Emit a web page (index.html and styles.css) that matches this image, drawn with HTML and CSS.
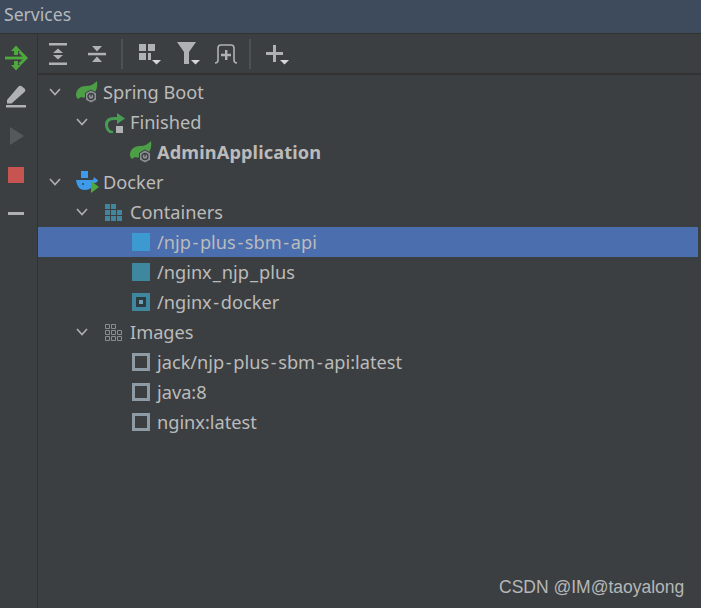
FILE: index.html
```html
<!DOCTYPE html>
<html lang="en">
<head>
<meta charset="utf-8">
<title>Services</title>
<link rel="stylesheet" href="styles.css">
</head>
<body>
<div class="window">
  <header class="title">Services</header>
  <div class="main">
    <aside class="side">
      <div class="side-btn"><svg width="24" height="28" viewBox="0 0 24 28"><path d="M1 14H20" stroke="#4fa83d" stroke-width="2.800"/><path d="M15.500 7.500L22 14l-6.500 6.500" fill="none" stroke="#4fa83d" stroke-width="3"/><path d="M12 1.500l5 5.500h-3v4h-4V7H7z" fill="#4fa83d"/><path d="M10 17h4v4h3L12 26.500 7 21h3z" fill="#4fa83d"/></svg></div>
      <div class="side-btn"><svg width="20" height="23" viewBox="0 0 20 23"><path d="M1 15L12.500 1.500c1-1 2.500-1 3.500 0l2.500 2c1 1 1 2.500 0 3.500L5.500 18.500 1 18.500z" fill="#afb1b3"/><rect x="0" y="20" width="20" height="2.500" fill="#afb1b3"/></svg></div>
      <div class="side-btn"><svg class="play" width="14" height="18" viewBox="0 0 14 18"><path d="M0 0L14 9 0 18z" fill="#56595b"/></svg></div>
      <div class="side-btn"><div class="stop"></div></div>
      <div class="side-btn"><div class="minus"></div></div>
    </aside>
    <div class="content">
      <nav class="toolbar">
        <svg class="tool t-expand" width="18" height="22" viewBox="0 0 18 22"><rect width="18" height="2.500" fill="#afb1b3"/><rect y="19.500" width="18" height="2.500" fill="#afb1b3"/><path d="M9 5.500l5 4.500H4zM9 16.500l5-4.500H4z" fill="#afb1b3"/></svg>
        <svg class="tool t-collapse" width="18" height="18" viewBox="0 0 18 18"><rect y="7.800" width="18" height="2.500" fill="#afb1b3"/><path d="M9 6.500L4 1h10zM9 11.500L14 17H4z" fill="#afb1b3"/></svg>
        <span class="sep s-one"></span>
        <svg class="tool t-group" width="22" height="22" viewBox="0 0 22 22"><path d="M0 1h7v7H0zM9 1h7v7H9zM0 10h7v7H0zM9 10h3v7H9z" fill="#afb1b3"/><path d="M13 17h9l-4.500 4.500z" fill="#d5d7d9"/></svg>
        <svg class="tool t-filter" width="23" height="24" viewBox="0 0 23 24"><path d="M0 0h19L12 10v12H7V10z" fill="#afb1b3"/><path d="M14 18h9l-4.500 4.500z" fill="#d5d7d9"/></svg>
        <svg class="tool t-new" width="24" height="22" viewBox="0 0 24 22"><path d="M1 20c2.500 0 3-1 3-3V5c0-2 1-3 3-3h10c2 0 3 1 3 3v12c0 2 .500 3 3 3" fill="none" stroke="#afb1b3" stroke-width="1.600"/><path d="M11 7h2.400v3.800H17v2.400h-3.600V17H11v-3.800H7v-2.400h4z" fill="#afb1b3"/></svg>
        <span class="sep s-two"></span>
        <svg class="tool t-add" width="23" height="24" viewBox="0 0 23 24"><path d="M7 3h3v7h7v3h-7v7H7v-7H0v-3h7z" fill="#afb1b3"/><path d="M14 18h9l-4.500 4.500z" fill="#d5d7d9"/></svg>
      </nav>
      <ul class="tree">
        <li class="row l1"><svg class="chev" width="16" height="16" viewBox="0 0 16 16"><path d="M3 5l5 5.500L13 5" fill="none" stroke="#afb1b3" stroke-width="1.600"/></svg>
          <svg class="icon" width="22" height="22" viewBox="0 0 22 22"><use href="#spring"/></svg><span>Spring Boot</span></li>
        <li class="row l2"><svg class="chev" width="16" height="16" viewBox="0 0 16 16"><path d="M3 5l5 5.500L13 5" fill="none" stroke="#afb1b3" stroke-width="1.600"/></svg>
          <svg class="icon" width="22" height="22" viewBox="0 0 22 22"><path d="M15 7.500H11C6 7.500 3.500 10 3.500 14c0 4 2.500 7 6.500 7.500" fill="none" stroke="#499c54" stroke-width="3"/><path d="M14 2l8 5.500L14 13z" fill="#499c54"/><rect x="13" y="15" width="7" height="7" fill="#afb1b3"/></svg><span>Finished</span></li>
        <li class="row l3"><span class="chev-space"></span>
          <svg class="icon" width="22" height="22" viewBox="0 0 22 22"><use href="#spring"/></svg><span class="bold">AdminApplication</span></li>
        <li class="row l1 docker"><svg class="chev" width="16" height="16" viewBox="0 0 16 16"><path d="M3 5l5 5.500L13 5" fill="none" stroke="#afb1b3" stroke-width="1.600"/></svg>
          <svg class="icon" width="24" height="22" viewBox="0 0 24 22"><rect x="5" y="0" width="7" height="7" fill="#3d9be9"/><path d="M0 9h17l1-3 2 2 2 1c-1 3-3 3-4 3-1 4-4 7-9 7-5 0-8-3-9-10z" fill="#3d9be9"/><circle cx="7" cy="13" r="1" fill="#27455f"/><path d="M15 10l8 6-8 6z" fill="#4fa83d"/></svg><span>Docker</span></li>
        <li class="row l2"><svg class="chev" width="16" height="16" viewBox="0 0 16 16"><path d="M3 5l5 5.500L13 5" fill="none" stroke="#afb1b3" stroke-width="1.600"/></svg>
          <svg class="icon" width="22" height="22" viewBox="0 0 22 22"><path d="M2 3h5v5H2zM8 3h5v5H8zM2 9h5v5H2zM8 9h5v5H8zM14 9h5v5h-5zM2 15h5v5H2zM8 15h5v5H8zM14 15h5v5h-5z" fill="#40869f"/></svg><span>Containers</span></li>
        <li class="row l3 selected"><span class="chev-space"></span>
          <svg class="icon" width="22" height="22" viewBox="0 0 22 22"><rect x="2" y="2" width="18" height="18" fill="#3d9ad1"/></svg><span>/njp<span class="hy">-</span>plus<span class="hy">-</span>sbm<span class="hy">-</span>api</span></li>
        <li class="row l3"><span class="chev-space"></span>
          <svg class="icon" width="22" height="22" viewBox="0 0 22 22"><rect x="2" y="2" width="18" height="18" fill="#3f869f"/></svg><span>/nginx<span class="us">_</span>njp<span class="us">_</span>plus</span></li>
        <li class="row l3"><span class="chev-space"></span>
          <svg class="icon" width="22" height="22" viewBox="0 0 22 22"><rect x="2" y="2" width="18" height="18" fill="#3f869f"/><rect x="6" y="6" width="10" height="10" fill="#2e3a42"/><rect x="9" y="9" width="4" height="4" fill="#6fa0b5"/></svg><span>/nginx<span class="hy">-</span>docker</span></li>
        <li class="row l2"><svg class="chev" width="16" height="16" viewBox="0 0 16 16"><path d="M3 5l5 5.500L13 5" fill="none" stroke="#afb1b3" stroke-width="1.600"/></svg>
          <svg class="icon" width="22" height="22" viewBox="0 0 22 22"><path d="M2.500 3.500h4v4h-4zM8.500 3.500h4v4h-4zM2.500 9.500h4v4h-4zM8.500 9.500h4v4h-4zM14.500 9.500h4v4h-4zM2.500 15.500h4v4h-4zM8.500 15.500h4v4h-4zM14.500 15.500h4v4h-4z" fill="none" stroke="#8a8d90" stroke-width="1"/></svg><span>Images</span></li>
        <li class="row l3"><span class="chev-space"></span>
          <svg class="icon" width="22" height="22" viewBox="0 0 22 22"><rect x="3.500" y="3.500" width="15" height="15" fill="none" stroke="#8e9ba5" stroke-width="3"/></svg><span>jack/njp<span class="hy">-</span>plus<span class="hy">-</span>sbm<span class="hy">-</span>api:latest</span></li>
        <li class="row l3"><span class="chev-space"></span>
          <svg class="icon" width="22" height="22" viewBox="0 0 22 22"><rect x="3.500" y="3.500" width="15" height="15" fill="none" stroke="#8e9ba5" stroke-width="3"/></svg><span>java:8</span></li>
        <li class="row l3"><span class="chev-space"></span>
          <svg class="icon" width="22" height="22" viewBox="0 0 22 22"><rect x="3.500" y="3.500" width="15" height="15" fill="none" stroke="#8e9ba5" stroke-width="3"/></svg><span>nginx:latest</span></li>
      </ul>
    </div>
  </div>
  <div class="watermark">CSDN @IM@taoyalong</div>
</div>
<svg class="defs" width="0" height="0"><defs><g id="spring"><path d="M0 14C0 8 5 5 10 5c5 0 8-2 11-5 1 6-1 12-5 14-4 3-8 3-11 2-1 1-2 1-3 2-1-1-2-2-2-4z" fill="#4d9f47"/><path d="M15 9l5.500 3v7L15 22l-5.500-3v-7z" fill="#8c9094" stroke="#3c3f41" stroke-width="1"/><circle cx="15" cy="15.500" r="3" fill="none" stroke="#3c3f41" stroke-width="1.300"/><path d="M15 12.500v3" stroke="#3c3f41" stroke-width="1.300"/></g></defs></svg>
</body>
</html>
```
FILE: styles.css
```css
* { box-sizing: border-box; }
html, body { margin: 0; padding: 0; }
body { background: #3c3f41; font-family: "Noto Sans", "Open Sans", sans-serif; color: #bbbbbb; }
.window { position: relative; width: 701px; height: 608px; overflow: hidden; display: flex; flex-direction: column; background: #3c3f41; }
.title { height: 34px; flex: none; background: #3d4b5c; border-bottom: 1px solid #323232; padding-left: 4px; font-size: 17.600px; line-height: 29px; color: #b4b8bc; }
.main { flex: 1; display: flex; min-height: 0; }
.side { width: 38px; flex: none; border-right: 1px solid #323232; padding: 4px 5px 0 0; display: flex; flex-direction: column; }
.side-btn { height: 39px; display: flex; align-items: center; justify-content: center; }
.side-btn svg { display: block; }
.side-btn .play { margin-left: 2px; }
.stop { width: 16px; height: 16px; background: #c75450; }
.minus { width: 16px; height: 3px; background: #afb1b3; }
.content { flex: 1; min-width: 0; display: flex; flex-direction: column; }
.toolbar { height: 41px; flex: none; border-bottom: 2px solid #323232; display: flex; align-items: center; padding-left: 11px; }
.tool { display: block; flex: none; }
.t-collapse { margin-left: 21px; }
.sep { width: 2px; height: 30px; background: #4f5254; flex: none; }
.s-one { margin-left: 15px; }
.t-group { margin-left: 16px; }
.t-filter { margin-left: 16px; }
.t-new { margin-left: 14px; }
.s-two { margin-left: 11px; }
.t-add { margin-left: 15px; }
.tree { list-style: none; margin: 2px 3px 0 0; padding: 0; }
.row { height: 30px; display: flex; align-items: center; font-size: 18.200px; line-height: 30px; color: #bbbbbb; white-space: nowrap; }
.l1 { padding-left: 9px; }
.l2 { padding-left: 36px; }
.l3 { padding-left: 63px; }
.chev, .chev-space { width: 16px; flex: none; display: block; }
.icon { margin-left: 13px; margin-right: 5px; flex: none; display: block; }
.docker .icon { margin-right: 3px; }
.bold { font-weight: 700; letter-spacing: .12px; }
.hy { margin: 0 1.600px; }
.us { margin: 0 1px; }
.selected { background: #4b6eaf; }
.defs { position: absolute; }
.watermark { position: absolute; left: 499px; top: 577px; font-family: "Liberation Sans", Arial, sans-serif; font-size: 17.500px; line-height: 20px; color: #b5b7b9; }
```
